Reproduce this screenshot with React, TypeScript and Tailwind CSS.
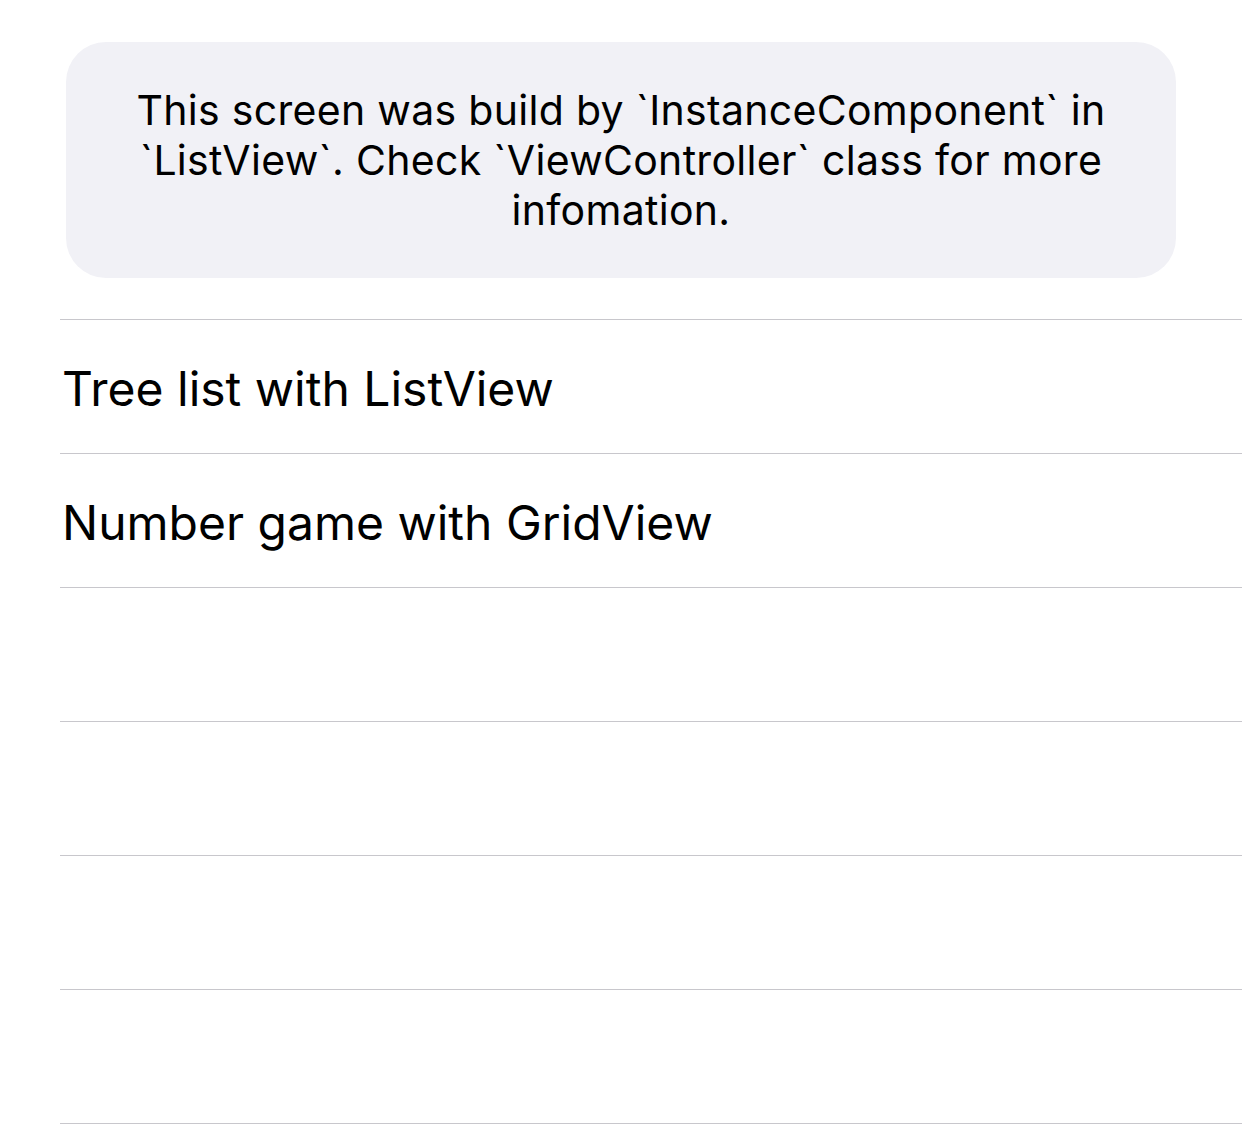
const rows = ['Tree list with ListView', 'Number game with GridView', '', '', '', '']

export default function App() {
  return (
    <div className="min-h-[1148px] bg-white pt-[42px] text-black" style={{ fontFamily: 'Inter, "Noto Sans", sans-serif' }}>
      <div className="mx-[66px] flex h-[236px] w-[1110px] items-center justify-center rounded-[40px] bg-[#f1f1f6] px-[60px]">
        <p className="text-center text-[41px] leading-[50px] tracking-[0.3px]">
          This screen was build by `InstanceComponent` in `ListView`. Check `ViewController` class for more infomation.
        </p>
      </div>
      <div className="mt-[41px] ml-[60px] border-b border-[#c8c7cc]">
        {rows.map((r, i) => (
          <div key={i} className="flex h-[134px] items-center border-t border-[#c8c7cc] pt-[4px] pl-[2px] text-[48px]">
            {r}
          </div>
        ))}
      </div>
    </div>
  )
}
